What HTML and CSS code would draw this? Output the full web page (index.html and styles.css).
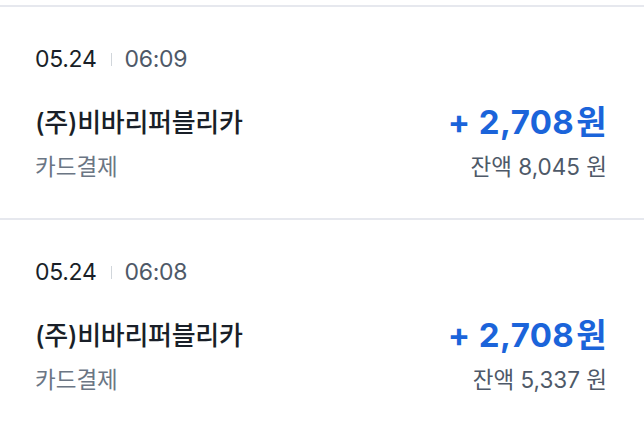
FILE: index.html
```html
<!DOCTYPE html>
<html lang="ko">
<head>
<meta charset="utf-8">
<link rel="stylesheet" href="styles.css">
</head>
<body>
<div class="list">
  <div class="item">
    <div class="date-row"><span class="date">05.24</span><span class="sep"></span><span class="time">06:09</span></div>
    <div class="row main-row"><span class="name">(주)비바리퍼블리카</span><span class="amount">+ 2,708<span class="won">원</span></span></div>
    <div class="row sub-row"><span class="method">카드결제</span><span class="balance">잔액 8,045 원</span></div>
  </div>
  <div class="item">
    <div class="date-row"><span class="date">05.24</span><span class="sep"></span><span class="time">06:08</span></div>
    <div class="row main-row"><span class="name">(주)비바리퍼블리카</span><span class="amount">+ 2,708<span class="won">원</span></span></div>
    <div class="row sub-row"><span class="method">카드결제</span><span class="balance">잔액 5,337 원</span></div>
  </div>
</div>
</body>
</html>
```
FILE: styles.css
```css
html, body {
  margin: 0;
  padding: 0;
  background: #ffffff;
}
body {
  padding-top: 5px;
  font-family: Inter, "Noto Sans CJK KR", sans-serif;
  color: #191f28;
}
.list {
  border-top: 2px solid #e6e8ee;
}
.item {
  padding: 37px 37px 38px 35px;
  border-bottom: 2px solid #e6e8ee;
  display: flex;
  flex-direction: column;
}
.date-row {
  display: flex;
  align-items: center;
  height: 30px;
  font-size: 23px;
  letter-spacing: -0.3px;
}
.date {
  color: #191f28;
}
.sep {
  width: 1px;
  height: 13px;
  background: #d1d6db;
  margin: 0 13px 0 14px;
}
.time {
  color: #4e5968;
}
.row {
  display: flex;
  justify-content: space-between;
  align-items: center;
}
.main-row {
  margin-top: 28px;
  height: 36px;
}
.name {
  font-size: 26px;
  font-weight: 500;
  letter-spacing: -0.3px;
  color: #191f28;
}
.amount {
  font-size: 33px;
  font-weight: 700;
  color: #1b64da;
  letter-spacing: 0.4px;
}
.won {
  margin-left: 2px;
}
.sub-row {
  margin-top: 12px;
  height: 30px;
  font-size: 22.5px;
  color: #4e5968;
}
.method {
  color: #6b7684;
}
.balance {
  color: #4e5968;
}
```
